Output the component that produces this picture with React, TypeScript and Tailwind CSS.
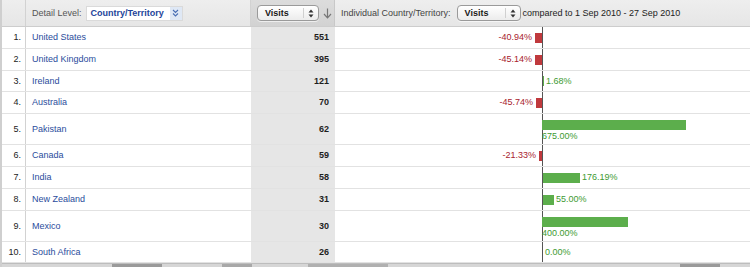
import React from "react";

type Row = { n: number; name: string; visits: number; pct: string; neg: boolean; w: number; h: number; wrap?: boolean };

const rows: Row[] = [
  { n: 1, name: "United States", visits: 551, pct: "-40.94%", neg: true, w: 7, h: 22 },
  { n: 2, name: "United Kingdom", visits: 395, pct: "-45.14%", neg: true, w: 7, h: 22 },
  { n: 3, name: "Ireland", visits: 121, pct: "1.68%", neg: false, w: 1, h: 21 },
  { n: 4, name: "Australia", visits: 70, pct: "-45.74%", neg: true, w: 6, h: 22 },
  { n: 5, name: "Pakistan", visits: 62, pct: "675.00%", neg: false, w: 144, h: 31, wrap: true },
  { n: 6, name: "Canada", visits: 59, pct: "-21.33%", neg: true, w: 3, h: 22 },
  { n: 7, name: "India", visits: 58, pct: "176.19%", neg: false, w: 37, h: 22 },
  { n: 8, name: "New Zealand", visits: 31, pct: "55.00%", neg: false, w: 11, h: 22 },
  { n: 9, name: "Mexico", visits: 30, pct: "400.00%", neg: false, w: 86, h: 31, wrap: true },
  { n: 10, name: "South Africa", visits: 26, pct: "0.00%", neg: false, w: 0, h: 21 },
];

function UpDown() {
  return (
    <svg width="6" height="9" viewBox="0 0 6 9" className="block">
      <path d="M3 0.5 L5.5 3.5 L0.5 3.5 Z" fill="#333" />
      <path d="M3 8.5 L5.5 5.5 L0.5 5.5 Z" fill="#333" />
    </svg>
  );
}

function Select({ width }: { width: number }) {
  return (
    <div
      className="flex items-center h-[16px] rounded-[4px] border border-[#9a9a9a] bg-gradient-to-b from-white to-[#ececec] shadow-[0_1px_0_rgba(255,255,255,0.6)]"
      style={{ width }}
    >
      <span className="pl-[7px] font-bold text-[#1a1a1a] flex-1">Visits</span>
      <span className="w-px h-[10px] bg-[#d0d0d0]" />
      <span className="px-[4px]">
        <UpDown />
      </span>
    </div>
  );
}

export default function App() {
  return (
    <div
      className="w-[750px] h-[267px] overflow-hidden bg-white text-[9px] leading-none"
      style={{ fontFamily: '"Liberation Sans", Arial, sans-serif' }}
    >
      <div className="border-l-2 border-[#cfcfcf]">
        {/* header */}
        <div className="flex h-[27px] bg-gradient-to-b from-[#eeeeee] to-[#e6e6e6] border-b border-[#cdcdcd]">
          <div className="w-[24px] border-r border-[#d2d2d2]" />
          <div className="w-[225px] flex items-center pl-[6px] text-[#555] border-r border-[#d2d2d2]">
            <span>Detail Level:</span>
            <div className="ml-[4px] flex items-center h-[15px] w-[97px] bg-white border border-[#dadada]">
              <span className="pl-[4px] flex-1 font-bold text-[#23449a]">Country/Territory</span>
              <span className="w-[12px] h-full bg-[#dfe8f5] flex items-center justify-center">
                <svg width="7" height="8" viewBox="0 0 7 8">
                  <path d="M1 1 L3.5 3.5 L6 1 M1 4.5 L3.5 7 L6 4.5" stroke="#4a6fb5" strokeWidth="1.1" fill="none" />
                </svg>
              </span>
            </div>
          </div>
          <div className="w-[84px] bg-gradient-to-b from-[#dcdcdc] to-[#d2d2d2] flex items-center pl-[6px] border-r border-[#c8c8c8]">
            <Select width={62} />
            <svg width="9" height="11" viewBox="0 0 9 11" className="ml-[4px]">
              <path d="M4.5 0.5 V9.5 M1 6 L4.5 9.8 L8 6" stroke="#777" strokeWidth="1.2" fill="none" />
            </svg>
          </div>
          <div className="flex-1 flex items-center pl-[6px] text-[#444]">
            <span>Individual Country/Territory:</span>
            <span className="ml-[6px]">
              <Select width={64} />
            </span>
            <span className="ml-[2px] text-[#222]">compared to 1 Sep 2010 - 27 Sep 2010</span>
          </div>
        </div>

        {/* rows */}
        {rows.map((r) => (
          <div key={r.n} className="flex border-b border-[#e2e2e2]" style={{ height: r.h }}>
            <div className="w-[24px] flex items-center justify-end pr-[4px] text-[#222] border-r border-[#d2d2d2]">
              {r.n}.
            </div>
            <div className="w-[225px] flex items-center pl-[6px] text-[#2a4c9c]">{r.name}</div>
            <div className="w-[84px] bg-[#e6e6e6] flex items-center justify-end pr-[6px] font-bold text-[#1e1e1e]">
              {r.visits}
            </div>
            <div className="flex-1 flex">
              <div className="w-[207px] flex items-center justify-end">
                {r.neg && (
                  <>
                    <span className="text-[#a8222e] mr-[3px]">{r.pct}</span>
                    <span className="h-[10px] bg-[#c0393d]" style={{ width: r.w }} />
                  </>
                )}
              </div>
              <div className="w-px bg-[#555]" />
              <div className="flex-1">
                {!r.neg &&
                  (r.wrap ? (
                    <div className="flex flex-col pt-[6px]">
                      <span className="h-[10px] bg-[#5cae4c] -ml-px" style={{ width: r.w }} />
                      <span className="text-[#3e9a32] mt-[2px] -ml-px">{r.pct}</span>
                    </div>
                  ) : (
                    <div className="flex items-center h-full">
                      {r.w > 0 && <span className="h-[10px] bg-[#5cae4c]" style={{ width: r.w }} />}
                      <span className="text-[#3e9a32] ml-[2px]">{r.pct}</span>
                    </div>
                  ))}
              </div>
            </div>
          </div>
        ))}

        {/* bottom strip */}
        <div className="flex h-[4px] bg-[#d6d6d6] border-t border-[#bdbdbd]">
          <div className="w-[110px]" />
          <div className="w-[50px] bg-[#9a9a9a]" />
          <div className="w-[60px]" />
          <div className="w-[30px] bg-[#a8a8a8]" />
          <div className="w-[56px]" />
          <div className="w-[80px] bg-[#b0b0b0]" />
          <div className="flex-1" />
          <div className="w-[40px] bg-[#9a9a9a]" />
          <div className="w-[30px]" />
        </div>
      </div>
    </div>
  );
}
